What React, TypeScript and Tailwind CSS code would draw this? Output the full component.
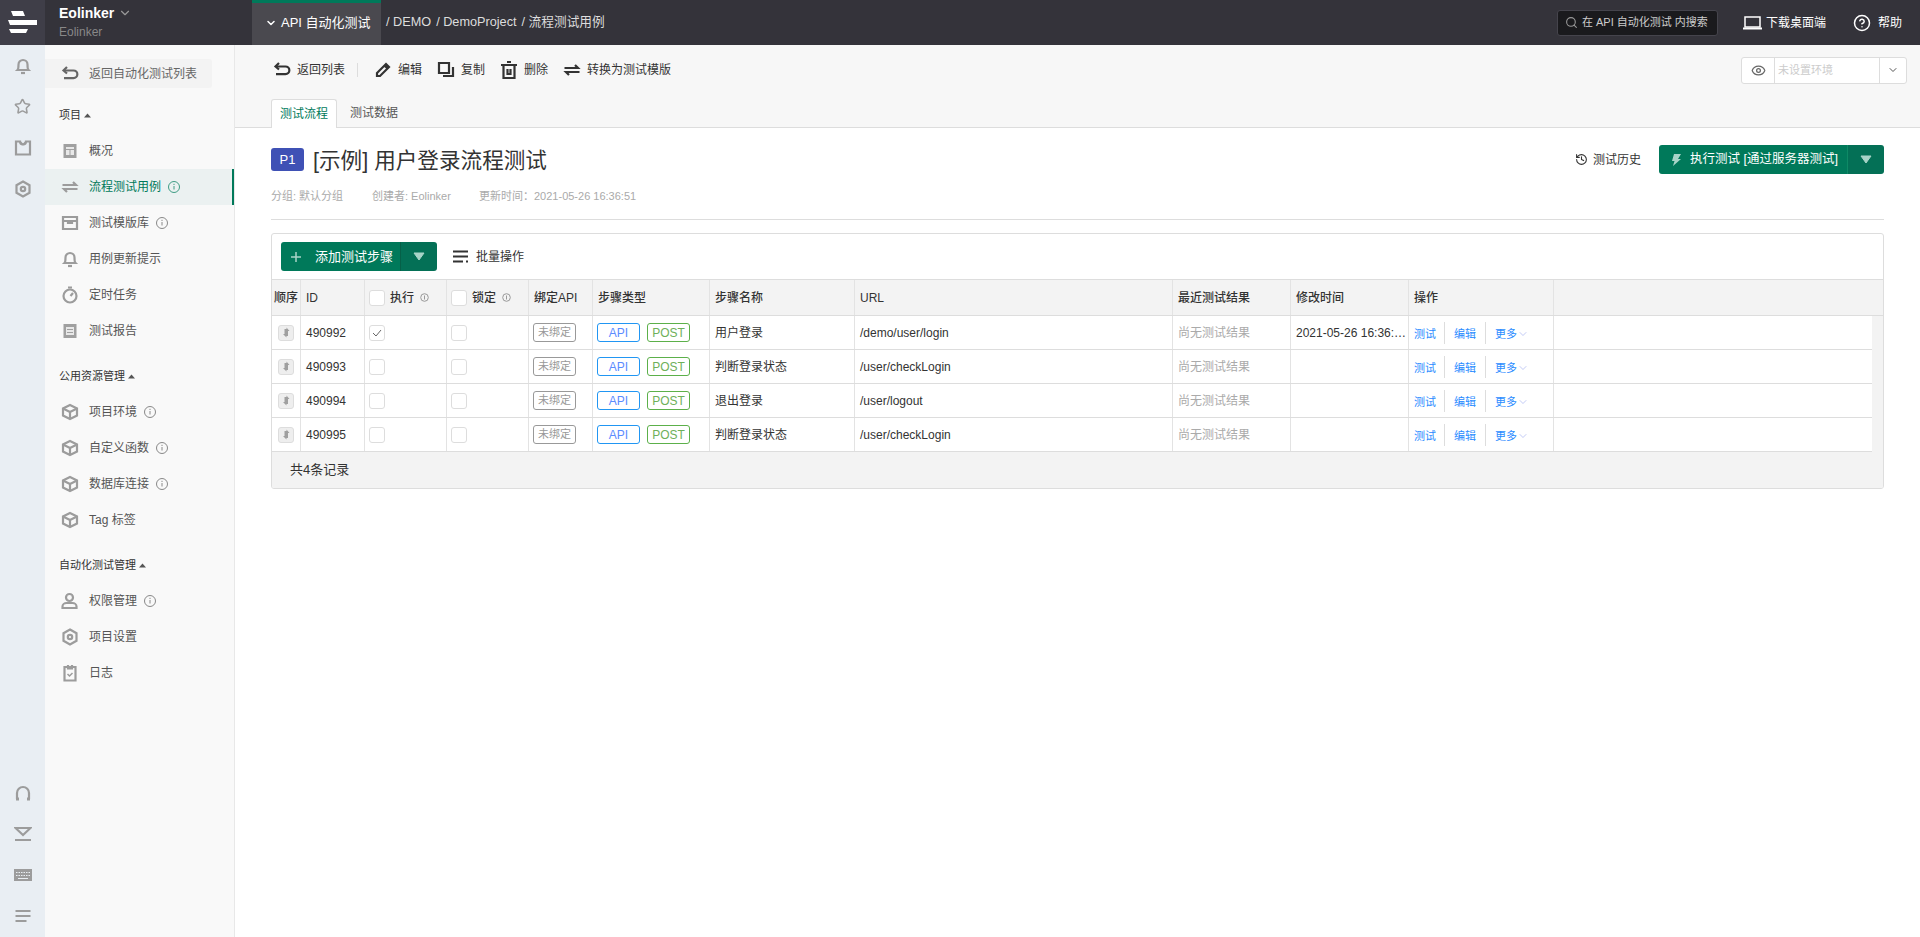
import { ChevronDown, CircleHelp, Eye, History, Search, Star } from "lucide-react";
import type { ReactNode } from "react";

const GRID = "grid grid-cols-[29px_64px_82px_82px_64px_117px_145px_318px_118px_118px_145px_1fr]";
const CELL = "flex items-center border-r border-[#e3e3e3] px-[5px] min-w-0";
const TIGHT = "flex items-center border-r border-[#e3e3e3] px-[4px] min-w-0";

const rows = [
  { id: "490992", name: "用户登录", url: "/demo/user/login", time: "2021-05-26 16:36:51", checked: true },
  { id: "490993", name: "判断登录状态", url: "/user/checkLogin", time: "", checked: false },
  { id: "490994", name: "退出登录", url: "/user/logout", time: "", checked: false },
  { id: "490995", name: "判断登录状态", url: "/user/checkLogin", time: "", checked: false },
];

function Svg({ children, className = "text-[#9c9c9c]", size = 18 }: { children: ReactNode; className?: string; size?: number }) {
  return (
    <svg width={size} height={size} viewBox="0 0 18 18" fill="none" stroke="currentColor" strokeWidth="2.2" className={`shrink-0 ${className}`}>
      {children}
    </svg>
  );
}

const BellIcon = ({ className }: { className?: string }) => (
  <Svg className={className}>
    <path d="M3.500 13c1-1 1-3 1-5.500a4.500 4.500 0 0 1 9 0c0 2.500 0 4.500 1 5.500z" />
    <path d="M7 16h4" />
  </Svg>
);
const ShirtIcon = () => (
  <Svg>
    <path d="M2 2.500h4c0 2 1.200 3 3 3s3-1 3-3h4v13H2z" />
    <path d="M6 2.500l3 3 3-3" strokeWidth="1.500" />
  </Svg>
);
const GearIcon = () => (
  <Svg>
    <path d="M9 1.500l6.500 3.700v7.600L9 16.500l-6.500-3.700V5.200z" />
    <circle cx="9" cy="9" r="2.200" />
  </Svg>
);
const CubeIcon = () => (
  <Svg>
    <path d="M9 2l7 3.500v7L9 16l-7-3.500v-7z" />
    <path d="M2 5.500l7 3.500 7-3.500M9 9v7" />
  </Svg>
);
const BackIcon = ({ className = "text-[#666]" }: { className?: string }) => (
  <Svg className={className}>
    <path d="M6 2L2.500 5.500 6 8.500" />
    <path d="M3 5.500h9.500a3.800 3.800 0 0 1 0 7.700H3" />
  </Svg>
);
const PanelIcon = () => (
  <svg width="18" height="18" viewBox="0 0 18 18" className="shrink-0">
    <rect x="2.500" y="2" width="13" height="14" fill="#a0a0a0" />
    <path d="M5 5h8v8H5z" fill="#e8e8e8" />
    <path d="M5 7.500h8M9 7.500V13" stroke="#a0a0a0" />
  </svg>
);
const ReportIcon = () => (
  <svg width="18" height="18" viewBox="0 0 18 18" className="shrink-0">
    <rect x="2.500" y="2" width="13" height="14" fill="#a0a0a0" />
    <path d="M5 5h8v8H5z" fill="#e8e8e8" />
    <path d="M6 7.500h6M6 10.500h6" stroke="#a0a0a0" />
  </svg>
);
const SwapIcon = ({ className }: { className?: string }) => (
  <Svg className={className}>
    <path d="M1.500 7h13.500L12 4M16.500 11H3l3 3" />
  </Svg>
);
const BoxIcon = () => (
  <Svg>
    <path d="M2 3h14v12H2zM2 7h14M7 7v2h4V7" />
  </Svg>
);
const ClockIcon = () => (
  <Svg>
    <circle cx="9" cy="10" r="6.500" />
    <path d="M7 1.500h4M9.500 10l2.500-3" />
  </Svg>
);
const UserIcon = () => (
  <Svg>
    <circle cx="8.500" cy="5.500" r="3.500" />
    <path d="M1.500 16v-1.500c0-2 2-3.500 4-3.500h6c2 0 4 1.500 4 3.500V16z" />
  </Svg>
);
const LogIcon = () => (
  <Svg>
    <path d="M3.500 3h11v13.500h-11zM7 1v3.500h4V1" />
    <path d="M6.500 10l2 2 3-3" strokeWidth="1.500" />
  </Svg>
);
const InfoIcon = ({ className = "text-[#888]" }: { className?: string }) => (
  <svg width="12" height="12" viewBox="0 0 12 12" fill="none" stroke="currentColor" className={`shrink-0 ${className}`}>
    <circle cx="6" cy="6" r="5.500" />
    <path d="M6 5v3.500M6 2.800v1.200" />
  </svg>
);
const SmallInfo = () => (
  <svg width="9" height="9" viewBox="0 0 9 9" fill="none" stroke="#999" className="shrink-0 ml-[6px]">
    <circle cx="4.500" cy="4.500" r="3.800" />
    <path d="M4.500 2.500v4" />
  </svg>
);
const Triangle = () => (
  <svg width="12" height="9" viewBox="0 0 12 9" className="shrink-0">
    <path d="M1 1h10L6 8z" fill="#a8d4c8" stroke="#a8d4c8" strokeLinejoin="round" />
  </svg>
);
const Caret = () => (
  <svg width="7" height="5" viewBox="0 0 7 5" className="ml-[3px]">
    <path d="M3.500 0.500L7 4.500H0z" fill="#555" />
  </svg>
);
const Grip = () => (
  <svg width="10" height="11" viewBox="0 0 10 11">
    <path d="M5.500 0.500L8.500 4H7v5H5.500v1.500L2 7h1.500V2h2z" fill="#a0a0a0" />
  </svg>
);

function Check({ checked = false }: { checked?: boolean }) {
  return (
    <span className="flex h-[16px] w-[16px] shrink-0 items-center justify-center rounded-[3px] border border-[#ddd] bg-white">
      {checked && (
        <svg width="10" height="8" viewBox="0 0 10 8" fill="none" stroke="#666">
          <path d="M1 4l3 3 5-6" />
        </svg>
      )}
    </span>
  );
}

function RailItem({ children }: { children: ReactNode }) {
  return <div className="flex h-[41px] items-center justify-center">{children}</div>;
}

function NavItem({ icon, label, info, active }: { icon: ReactNode; label: string; info?: boolean; active?: boolean }) {
  return (
    <div className={`flex h-[36px] items-center pl-[16px] ${active ? "border-r-2 border-[#00795a] bg-[#ebf1f1] text-[#00795a]" : "text-[#555]"}`}>
      <span className="flex w-[28px] justify-start">{icon}</span>
      <span>{label}</span>
      {info && <InfoIcon className={`ml-[7px] ${active ? "text-[#3f9c84]" : "text-[#888]"}`} />}
    </div>
  );
}

function NavGroup({ title, children }: { title: string; children: ReactNode }) {
  return (
    <div className="mt-[18px]">
      <div className="flex h-[18px] items-center pl-[14px] text-[11px] text-[#333]">
        {title}
        <Caret />
      </div>
      <div className="mt-[9px]">{children}</div>
    </div>
  );
}

function ToolAction({ icon, label, className = "" }: { icon: ReactNode; label: string; className?: string }) {
  return (
    <div className={`flex items-center gap-[6px] text-[#333] ${className}`}>
      {icon}
      <span>{label}</span>
    </div>
  );
}

export default function App() {
  return (
    <div className="flex h-screen w-full flex-col overflow-hidden bg-white text-[12px] text-[#333] [font-family:'Liberation_Sans','Noto_Sans_CJK_SC',sans-serif]">
      <header className="flex h-[45px] shrink-0 items-stretch bg-[#34333a] text-[#ddd]">
        <div className="flex w-[45px] items-center justify-center bg-[#3f3e48]">
          <svg width="30" height="24" viewBox="0 0 30 24" fill="#fff">
            <path d="M3 0h12l2 5H5zM0 9h29v5H2zM1 18h19l-2 4H3z" />
          </svg>
        </div>
        <div className="w-[207px] pl-[14px]">
          <div className="mt-[4px] flex h-[18px] items-center text-[14px] font-bold text-white">
            Eolinker
            <ChevronDown size={14} strokeWidth={2} className="ml-[4px] text-[#999]" />
          </div>
          <div className="mt-[2px] h-[16px] text-[12px] leading-[16px] text-[#888]">Eolinker</div>
        </div>
        <div className="flex w-[129px] items-center border-t-[3px] border-[#00795a] bg-[#4a494f] pb-[3px] pl-[13px] text-[13px] text-white">
          <ChevronDown size={12} strokeWidth={3} className="mr-[4px]" />
          API 自动化测试
        </div>
        <div className="ml-[5px] flex items-center gap-[5px] text-[12.7px] text-[#ddd]">
          <span>/ DEMO</span>
          <span>/ DemoProject</span>
          <span>/ 流程测试用例</span>
        </div>
        <div className="ml-auto flex items-center pr-[18px]">
          <div className="flex h-[26px] w-[161px] items-center rounded-[3px] border border-[#45444c] bg-[#1a1a1d] pl-[7px] text-[11px] text-[#ccc]">
            <Search size={13} strokeWidth={2} className="mr-[4px] text-[#999]" />
            在 API 自动化测试 内搜索
          </div>
          <svg width="19" height="14" viewBox="0 0 19 14" fill="none" className="ml-[25px] shrink-0">
            <path d="M2 1h15v10H2z" stroke="#fff" strokeWidth="1.500" />
            <path d="M0 12.500h19" stroke="#fff" strokeWidth="2" />
          </svg>
          <span className="ml-[4px] text-white">下载桌面端</span>
          <CircleHelp size={18} strokeWidth={2} className="ml-[27px] text-white" />
          <span className="ml-[7px] text-white">帮助</span>
        </div>
      </header>

      <div className="flex min-h-0 flex-1">
        <aside className="flex w-[45px] shrink-0 flex-col justify-between bg-[#e9eef3] pb-[1px]">
          <div>
            <RailItem><BellIcon /></RailItem>
            <RailItem><Star size={17} strokeWidth={2.2} className="text-[#9c9c9c]" /></RailItem>
            <RailItem><ShirtIcon /></RailItem>
            <RailItem><GearIcon /></RailItem>
          </div>
          <div>
            <RailItem>
              <Svg>
                <path d="M3 15V9a6 6 0 0 1 12 0v6" />
                <path d="M2 15h3M13 15h3" strokeWidth="3" />
              </Svg>
            </RailItem>
            <RailItem>
              <Svg>
                <path d="M1.500 3h15L9 10zM1 15h16" />
              </Svg>
            </RailItem>
            <RailItem>
              <svg width="20" height="14" viewBox="0 0 20 14" className="shrink-0">
                <rect x="1" y="1" width="18" height="12" fill="#9c9c9c" />
                <path d="M3 4.500h14M3 7.500h14" stroke="#e9eef3" strokeDasharray="1.500 1" />
                <path d="M5 10.500h10" stroke="#e9eef3" />
              </svg>
            </RailItem>
            <RailItem>
              <Svg>
                <path d="M1.500 4h15M1.500 9h15M1.500 14h11" />
              </Svg>
            </RailItem>
          </div>
        </aside>

        <nav className="w-[190px] shrink-0 border-r border-[#e8e8e8] bg-[#f9f9f9] pt-[14px]">
          <div className="flex h-[29px] w-[167px] items-center rounded-r-[3px] bg-[#f3f3f3] pl-[16px] text-[#666]">
            <span className="w-[28px]"><BackIcon /></span>
            返回自动化测试列表
          </div>
          <NavGroup title="项目">
            <NavItem icon={<PanelIcon />} label="概况" />
            <NavItem icon={<SwapIcon />} label="流程测试用例" info active />
            <NavItem icon={<BoxIcon />} label="测试模版库" info />
            <NavItem icon={<BellIcon />} label="用例更新提示" />
            <NavItem icon={<ClockIcon />} label="定时任务" />
            <NavItem icon={<ReportIcon />} label="测试报告" />
          </NavGroup>
          <NavGroup title="公用资源管理">
            <NavItem icon={<CubeIcon />} label="项目环境" info />
            <NavItem icon={<CubeIcon />} label="自定义函数" info />
            <NavItem icon={<CubeIcon />} label="数据库连接" info />
            <NavItem icon={<CubeIcon />} label="Tag 标签" />
          </NavGroup>
          <NavGroup title="自动化测试管理">
            <NavItem icon={<UserIcon />} label="权限管理" info />
            <NavItem icon={<GearIcon />} label="项目设置" />
            <NavItem icon={<LogIcon />} label="日志" />
          </NavGroup>
        </nav>

        <main className="min-w-0 flex-1">
          <div className="h-[83px] border-b border-[#ddd] bg-[#f7f7f7]">
            <div className="flex h-[50px] items-center pl-[38px] pr-[13px]">
              <ToolAction icon={<BackIcon className="text-[#333]" />} label="返回列表" />
              <span className="ml-[12px] h-[14px] w-px bg-[#ddd]" />
              <ToolAction
                className="ml-[16px]"
                icon={
                  <Svg className="text-[#333]">
                    <path d="M3 12L12 3l3 3-9 9H3zM10.500 4.500l3 3" />
                  </Svg>
                }
                label="编辑"
              />
              <ToolAction
                className="ml-[15px]"
                icon={
                  <Svg className="text-[#333]">
                    <path d="M2 2h10v10H2z" />
                    <path d="M6 15h10V6" />
                  </Svg>
                }
                label="复制"
              />
              <ToolAction
                className="ml-[15px]"
                icon={
                  <Svg className="text-[#333]">
                    <path d="M1 4h16M7 1h4M3.500 4v13h11V4M7.500 8v5h3V8" />
                  </Svg>
                }
                label="删除"
              />
              <ToolAction className="ml-[15px]" icon={<SwapIcon className="text-[#333]" />} label="转换为测试模版" />
              <div className="ml-auto flex h-[27px] w-[166px] items-stretch rounded-[3px] border border-[#ddd] bg-white text-[11px] text-[#ccc]">
                <span className="flex w-[33px] items-center justify-center border-r border-[#ddd]">
                  <Eye size={15} strokeWidth={2} className="text-[#666]" />
                </span>
                <span className="flex flex-1 items-center pl-[3px]">未设置环境</span>
                <span className="flex w-[27px] items-center justify-center border-l border-[#ddd]">
                  <ChevronDown size={12} strokeWidth={2} className="text-[#555]" />
                </span>
              </div>
            </div>
            <div className="mt-[4px] flex pl-[36px]">
              <div className="flex h-[29px] w-[66px] items-center justify-center rounded-t-[3px] border border-b-0 border-[#ddd] bg-white pb-[1px] text-[#00795a]">
                测试流程
              </div>
              <div className="ml-[4px] flex h-[29px] w-[66px] items-center justify-center pb-[1px] text-[#555]">测试数据</div>
            </div>
          </div>

          <div className="px-[36px]">
            <div className="mt-[17px] flex h-[29px] items-center">
              <span className="flex h-[23px] w-[33px] items-center justify-center rounded-[3px] bg-[#3f51b5] text-[13px] text-white">P1</span>
              <h1 className="ml-[9px] mt-[3px] text-[21.6px] text-[#333]">[示例] 用户登录流程测试</h1>
              <div className="ml-auto flex items-center gap-[5px]">
                <History size={13} strokeWidth={2} className="text-[#333]" />
                <span>测试历史</span>
              </div>
              <div className="ml-[18px] flex h-[29px] w-[225px] overflow-hidden rounded-[3px] text-[12.5px] text-white">
                <div className="flex w-[189px] items-center border-r border-[#0e8a66] bg-[#00795a] pl-[12px]">
                  <svg width="10" height="12" viewBox="0 0 10 12" className="mr-[9px]">
                    <path d="M3 0h7L7 5h3L2 12l1.500-5H1z" fill="#a8d4c8" />
                  </svg>
                  执行测试 [通过服务器测试]
                </div>
                <div className="flex flex-1 items-center justify-center bg-[#047056]">
                  <Triangle />
                </div>
              </div>
            </div>

            <div className="mt-[14px] flex h-[16px] items-center text-[11px] text-[#aaa]">
              <span className="w-[101px]">分组: 默认分组</span>
              <span className="w-[107px]">创建者: Eolinker</span>
              <span>更新时间：2021-05-26 16:36:51</span>
            </div>
            <div className="mt-[15px] h-px bg-[#ddd]" />

            <div className="mt-[13px] overflow-hidden rounded-[3px] border border-[#ddd]">
              <div className="flex h-[46px] items-start border-b border-[#ddd] pl-[9px] pt-[8px]">
                <div className="flex h-[29px] w-[156px] overflow-hidden rounded-[3px] text-[13px] text-white">
                  <div className="flex w-[120px] items-center border-r border-[#066048] bg-[#00795a] pl-[10px]">
                    <svg width="10" height="10" viewBox="0 0 10 10" stroke="#a8d4c8" strokeWidth="1.500" className="mr-[14px]">
                      <path d="M5 0v10M0 5h10" />
                    </svg>
                    添加测试步骤
                  </div>
                  <div className="flex flex-1 items-center justify-center bg-[#047056]">
                    <Triangle />
                  </div>
                </div>
                <div className="ml-[16px] flex h-[29px] items-center gap-[8px]">
                  <svg width="15" height="13" viewBox="0 0 15 13" fill="none" stroke="#333" strokeWidth="2">
                    <path d="M0 1.500h15M0 6.500h15M0 11.500h10" />
                    <path d="M13 10.500h2v2h-2z" fill="#333" strokeWidth="0" />
                  </svg>
                  <span>批量操作</span>
                </div>
              </div>

              <div className={`${GRID} h-[36px] border-b border-[#ddd] bg-[#f3f3f3] font-medium`}>
                <div className={`${CELL} !px-[2px] whitespace-nowrap`}>顺序</div>
                <div className={CELL}>ID</div>
                <div className={TIGHT}>
                  <Check />
                  <span className="ml-[5px]">执行</span>
                  <SmallInfo />
                </div>
                <div className={TIGHT}>
                  <Check />
                  <span className="ml-[5px]">锁定</span>
                  <SmallInfo />
                </div>
                <div className={CELL}>绑定API</div>
                <div className={CELL}>步骤类型</div>
                <div className={CELL}>步骤名称</div>
                <div className={CELL}>URL</div>
                <div className={CELL}>最近测试结果</div>
                <div className={CELL}>修改时间</div>
                <div className={CELL}>操作</div>
                <div />
              </div>

              <div className="flex">
                <div className="min-w-0 flex-1">
                  {rows.map((row) => (
                    <div key={row.id} className={`${GRID} h-[34px] border-b border-[#ddd]`}>
                      <div className={`${CELL} justify-center`}>
                        <span className="flex h-[16px] w-[16px] items-center justify-center rounded-[3px] border border-[#ddd] bg-[#eee]">
                          <Grip />
                        </span>
                      </div>
                      <div className={CELL}>{row.id}</div>
                      <div className={TIGHT}><Check checked={row.checked} /></div>
                      <div className={TIGHT}><Check /></div>
                      <div className={TIGHT}>
                        <span className="flex h-[19px] w-[43px] items-center justify-center rounded-[3px] border border-[#999] text-[11px] text-[#999]">未绑定</span>
                      </div>
                      <div className={TIGHT}>
                        <span className="flex h-[19px] w-[43px] items-center justify-center rounded-[3px] border border-[#2196f3] text-[#5b8cff]">API</span>
                        <span className="ml-[7px] flex h-[19px] w-[43px] items-center justify-center rounded-[3px] border border-[#5cb04a] text-[#6eb05a]">POST</span>
                      </div>
                      <div className={CELL}>{row.name}</div>
                      <div className={CELL}>{row.url}</div>
                      <div className={`${CELL} text-[#aaa]`}>尚无测试结果</div>
                      <div className={`${CELL} !pr-[1px]`}><span className="truncate">{row.time}</span></div>
                      <div className={`${CELL} text-[11px] text-[#2b8cff]`}>
                        <span className="pt-[3px]">测试</span>
                        <span className="ml-[8px] mr-[9px] h-[22px] w-px bg-[#ddd]" />
                        <span className="pt-[3px]">编辑</span>
                        <span className="mx-[9px] h-[22px] w-px bg-[#ddd]" />
                        <span className="pt-[3px]">更多</span>
                        <ChevronDown size={12} strokeWidth={1.2} className="mt-[2px] text-[#99a6ee]" />
                      </div>
                      <div />
                    </div>
                  ))}
                </div>
                <div className="w-[11px] shrink-0 bg-[#f3f3f3]" />
              </div>

              <div className="flex h-[36px] items-center bg-[#f3f3f3] pl-[18px] text-[13px]">共4条记录</div>
            </div>
          </div>
        </main>
      </div>
    </div>
  );
}
